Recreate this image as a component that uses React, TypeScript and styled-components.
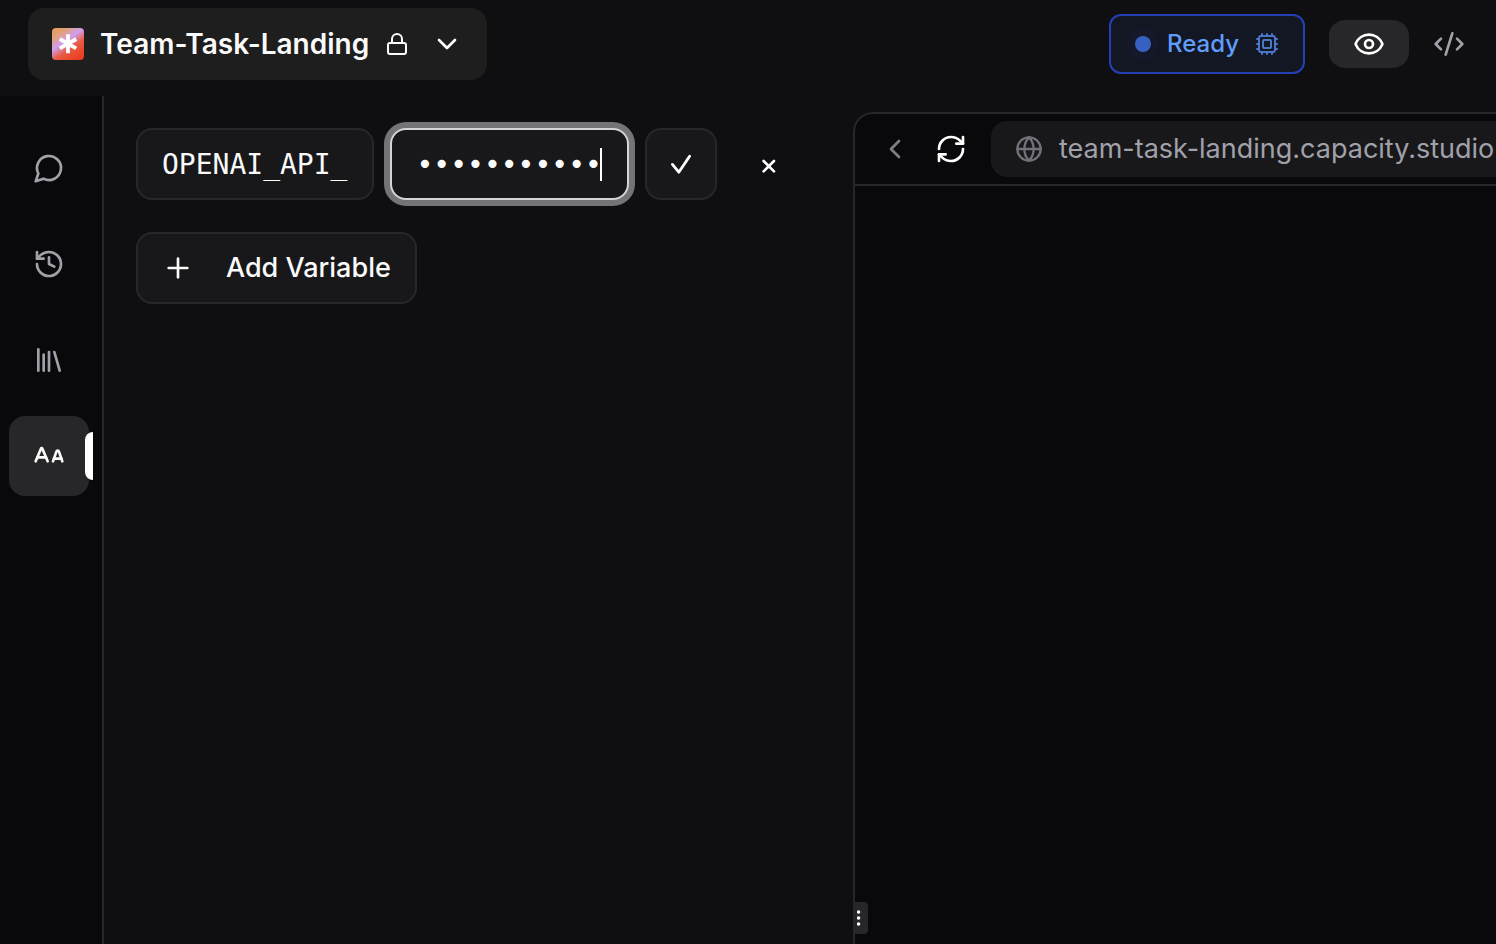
import React from "react";
import styled, { createGlobalStyle, css } from "styled-components";
import {
  ALargeSmall,
  ChevronDown,
  ChevronLeft,
  CodeXml,
  Cpu,
  Eye,
  Globe,
  History,
  Library,
  Lock,
  Plus,
  RefreshCw,
} from "lucide-react";

const color = {
  page: "#0f0f11",
  deep: "#09090b",
  surface: "#18181b",
  raised: "#1e1e1e",
  line: "#27272a",
  text: "#fafafa",
  muted: "#a1a1aa",
  faint: "#71717a",
};

const GlobalStyle = createGlobalStyle`
  *, *::before, *::after { box-sizing: border-box; }
  html, body, #root { height: 100%; }
  body {
    margin: 0;
    overflow: hidden;
    background: ${color.page};
    color: ${color.text};
    font-family: Inter, "Liberation Sans", sans-serif;
    font-size: 28px;
    line-height: 40px;
  }
  button, input { font: inherit; color: inherit; margin: 0; }
  button { cursor: pointer; }
  svg { display: block; flex-shrink: 0; }
`;

const Shell = styled.div`
  display: flex;
  flex-direction: column;
  height: 100%;
`;

const Header = styled.header`
  display: flex;
  flex-shrink: 0;
  align-items: center;
  justify-content: space-between;
  padding: 8px 7px 16px 28px;
`;

const ProjectButton = styled.button`
  display: flex;
  align-items: center;
  gap: 16px;
  height: 72px;
  padding: 0 24px;
  border: 0;
  border-radius: 16px;
  background: ${color.raised};
  font-weight: 600;
  white-space: nowrap;

  svg:last-child {
    margin-left: 6px;
  }
`;

const HeaderActions = styled.div`
  display: flex;
  align-items: center;
`;

const StatusBadge = styled.button`
  display: flex;
  align-items: center;
  height: 60px;
  margin-right: 24px;
  padding: 0 24px 0 16px;
  border: 2px solid #2440b4;
  border-radius: 12px;
  background: #131623;
  color: #609dfa;
  font-size: 24px;
  font-weight: 500;

  svg {
    margin-left: 16px;
    color: #4a78c6;
  }
`;

const StatusDot = styled.span`
  width: 16px;
  height: 16px;
  margin: 0 16px 0 8px;
  border-radius: 50%;
  background: #3661c0;
  box-shadow: 0 0 0 8px #151829;
`;

const ViewButton = styled.button<{ $active?: boolean }>`
  display: flex;
  align-items: center;
  justify-content: center;
  width: 80px;
  height: 48px;
  padding: 0;
  border: 0;
  border-radius: 16px;
  background: ${(p) => (p.$active ? color.line : "transparent")};
  color: ${(p) => (p.$active ? "#fff" : color.muted)};
`;

const Workspace = styled.div`
  display: grid;
  flex: 1;
  grid-template-columns: 104px 53.8fr 46.2fr;
  min-height: 0;
`;

const Sidebar = styled.nav`
  display: flex;
  flex-direction: column;
  gap: 16px;
  padding: 32px 9px;
  border-right: 2px solid ${color.line};
  background: ${color.deep};
`;

const NavButton = styled.button<{ $active?: boolean }>`
  position: relative;
  display: flex;
  align-items: center;
  justify-content: center;
  width: 80px;
  height: 80px;
  padding: 0;
  border: 0;
  border-radius: 16px;
  background: ${(p) => (p.$active ? color.line : "transparent")};
  color: ${(p) => (p.$active ? color.text : color.muted)};

  ${(p) =>
    p.$active &&
    css`
      &::after {
        content: "";
        position: absolute;
        top: 16px;
        right: -4px;
        width: 8px;
        height: 48px;
        border-radius: 8px 0 0 8px;
        background: #fff;
      }
    `}
`;

const VariablesPanel = styled.main`
  display: flex;
  flex-direction: column;
  align-items: flex-start;
  gap: 32px;
  min-width: 0;
  padding: 32px 48px 32px 32px;
`;

const VariableForm = styled.form`
  display: flex;
  gap: 16px;
  width: 100%;
`;

const Field = styled.label`
  position: relative;
  flex: 1;
  min-width: 0;
`;

const FieldInput = styled.input<{ $focused?: boolean }>`
  display: block;
  width: 100%;
  height: 72px;
  padding: 0 24px;
  border: 2px solid ${(p) => (p.$focused ? "#d4d4d8" : color.line)};
  border-radius: 16px;
  outline: none;
  background: ${color.surface};
  box-shadow: ${(p) => (p.$focused ? "0 0 0 6px #747476" : "none")};
  caret-color: transparent;
  font-family: "DejaVu Sans Mono", "Liberation Mono", monospace;
`;

const Caret = styled.span`
  position: absolute;
  top: 20px;
  left: 210px;
  width: 2px;
  height: 33px;
  background: #fff;
`;

const OutlineButton = styled.button`
  display: flex;
  align-items: center;
  gap: 32px;
  height: 72px;
  padding: 0 24px;
  border: 2px solid ${color.line};
  border-radius: 16px;
  background: ${color.surface};
  font-size: 27px;
  font-weight: 500;
  white-space: nowrap;
`;

const SquareButton = styled.button<{ $ghost?: boolean }>`
  display: flex;
  flex-shrink: 0;
  align-items: center;
  justify-content: center;
  width: 72px;
  height: 72px;
  padding: 0;
  border: 2px solid ${(p) => (p.$ghost ? "transparent" : color.line)};
  border-radius: 16px;
  background: ${(p) => (p.$ghost ? "transparent" : color.surface)};
`;

const Preview = styled.section`
  position: relative;
  min-width: 0;
  margin-top: 16px;
`;

const PreviewFrame = styled.div`
  height: 100%;
  overflow: hidden;
  border: solid ${color.line};
  border-width: 2px 0 0 2px;
  border-radius: 20px 0 0 0;
  background: ${color.deep};
`;

const BrowserBar = styled.div`
  display: flex;
  align-items: center;
  gap: 24px;
  height: 72px;
  padding-left: 24px;
  border-bottom: 2px solid ${color.line};
`;

const BarButton = styled.button<{ $dim?: boolean }>`
  flex-shrink: 0;
  padding: 0;
  border: 0;
  background: transparent;
  color: ${(p) => (p.$dim ? "#7f7f81" : "#fff")};
`;

const AddressBar = styled.div`
  display: flex;
  flex: 1 0 auto;
  align-items: center;
  gap: 16px;
  height: 56px;
  padding: 0 24px;
  border-radius: 16px;
  background: ${color.surface};
  color: ${color.faint};
`;

const AddressLink = styled.a`
  color: ${color.muted};
  font-size: 27px;
  text-decoration: none;
  white-space: nowrap;
`;

const ResizeHandle = styled.button`
  position: absolute;
  bottom: 10px;
  left: 2px;
  display: flex;
  align-items: center;
  width: 13px;
  height: 32px;
  padding: 0 2px;
  border: 0;
  border-radius: 0 4px 4px 0;
  background: ${color.line};
`;

const ProjectLogo = () => (
  <svg width="32" height="32" viewBox="0 0 32 32" aria-hidden="true">
    <defs>
      <linearGradient id="logo-fill" x1="0.1" y1="0" x2="0.8" y2="1">
        <stop offset="0" stopColor="#e89c5e" />
        <stop offset="0.2" stopColor="#e2a07c" />
        <stop offset="0.42" stopColor="#d0a0f0" />
        <stop offset="0.66" stopColor="#ea5a40" />
        <stop offset="1" stopColor="#ea3c20" />
      </linearGradient>
    </defs>
    <rect width="32" height="32" rx="4" fill="url(#logo-fill)" />
    <path
      d="M16 6.2v19M7.8 11l16.4 9.4M24.2 11L7.8 20.4"
      stroke="#fff"
      strokeWidth="3.8"
      fill="none"
    />
  </svg>
);

const ChatIcon = () => (
  <svg
    width="32"
    height="32"
    viewBox="0 0 24 24"
    fill="none"
    stroke="currentColor"
    strokeWidth="2"
    strokeLinecap="round"
    strokeLinejoin="round"
    aria-hidden="true"
  >
    <path d="M7.9 20A9 9 0 1 0 4 16.1L2 22Z" />
  </svg>
);

const ConfirmIcon = () => (
  <svg width="32" height="32" viewBox="0 0 32 32" aria-hidden="true">
    <path
      d="M7.4 16.4l6.4 7.8L24.6 8.2"
      fill="none"
      stroke="#fff"
      strokeWidth="2.8"
      strokeLinecap="round"
      strokeLinejoin="round"
    />
  </svg>
);

const DismissIcon = () => (
  <svg width="32" height="32" viewBox="0 0 32 32" aria-hidden="true">
    <path
      d="M10.6 13l10.4 10.4M21 13L10.6 23.4"
      fill="none"
      stroke="#fff"
      strokeWidth="2.6"
      strokeLinecap="round"
    />
  </svg>
);

const GripIcon = () => (
  <svg width="4" height="16" viewBox="0 0 4 16" fill="#fff" aria-hidden="true">
    <circle cx="1.6" cy="2" r="1.7" />
    <circle cx="1.6" cy="8" r="1.7" />
    <circle cx="1.6" cy="14" r="1.7" />
  </svg>
);

export default function App() {
  return (
    <>
      <GlobalStyle />
      <Shell>
        <Header>
          <ProjectButton type="button">
            <ProjectLogo />
            <span>Team-Task-Landing</span>
            <Lock size={24} strokeWidth={2} />
            <ChevronDown size={32} />
          </ProjectButton>
          <HeaderActions>
            <StatusBadge type="button">
              <StatusDot />
              Ready
              <Cpu size={24} />
            </StatusBadge>
            <ViewButton type="button" $active aria-label="Preview">
              <Eye size={32} />
            </ViewButton>
            <ViewButton type="button" aria-label="Code">
              <CodeXml size={32} />
            </ViewButton>
          </HeaderActions>
        </Header>

        <Workspace>
          <Sidebar>
            <NavButton type="button" aria-label="Chat">
              <ChatIcon />
            </NavButton>
            <NavButton type="button" aria-label="History">
              <History size={32} />
            </NavButton>
            <NavButton type="button" aria-label="Library">
              <Library size={32} />
            </NavButton>
            <NavButton type="button" $active aria-label="Variables">
              <ALargeSmall size={32} />
            </NavButton>
          </Sidebar>

          <VariablesPanel>
            <VariableForm onSubmit={(e) => e.preventDefault()}>
              <Field>
                <FieldInput
                  type="text"
                  aria-label="Variable name"
                  defaultValue="OPENAI_API_"
                />
              </Field>
              <Field>
                <FieldInput
                  type="password"
                  aria-label="Variable value"
                  autoComplete="off"
                  defaultValue="sk-proj-abc"
                  $focused
                />
                <Caret />
              </Field>
              <SquareButton type="submit" aria-label="Save variable">
                <ConfirmIcon />
              </SquareButton>
              <SquareButton type="button" $ghost aria-label="Cancel">
                <DismissIcon />
              </SquareButton>
            </VariableForm>
            <OutlineButton type="button">
              <Plus size={32} strokeWidth={2} />
              Add Variable
            </OutlineButton>
          </VariablesPanel>

          <Preview>
            <PreviewFrame>
              <BrowserBar>
                <BarButton type="button" $dim aria-label="Back">
                  <ChevronLeft size={32} />
                </BarButton>
                <BarButton type="button" aria-label="Reload">
                  <RefreshCw size={32} />
                </BarButton>
                <AddressBar>
                  <Globe size={28} />
                  <AddressLink href="#preview">
                    team-task-landing.capacity.studio
                  </AddressLink>
                </AddressBar>
              </BrowserBar>
            </PreviewFrame>
            <ResizeHandle type="button" aria-label="Resize panels">
              <GripIcon />
            </ResizeHandle>
          </Preview>
        </Workspace>
      </Shell>
    </>
  );
}
